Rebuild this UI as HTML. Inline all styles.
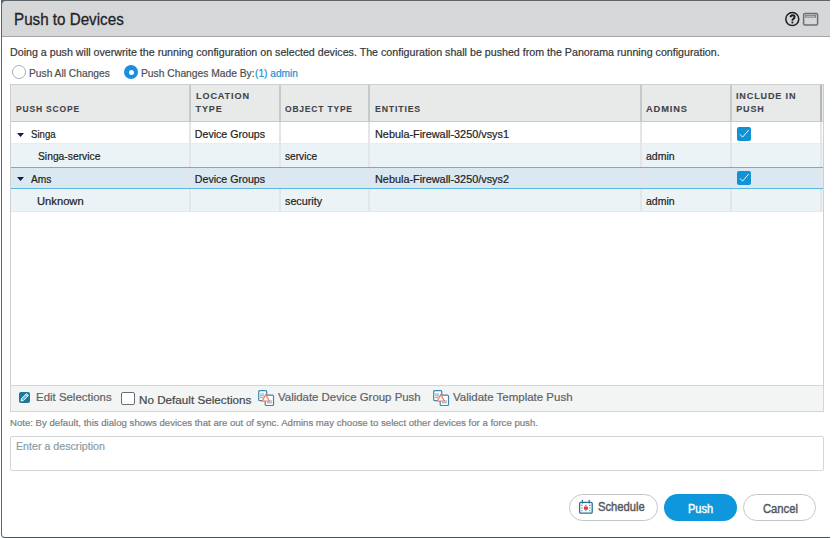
<!DOCTYPE html>
<html><head><meta charset="utf-8"><style>
*{box-sizing:border-box;margin:0;padding:0}
html,body{width:834px;height:538px;overflow:hidden;background:#fff;font-family:"Liberation Sans",sans-serif}
.a{position:absolute}
.t{position:absolute;white-space:nowrap;transform-origin:0 0}
</style></head><body>
<div class="a" style="left:1px;top:0;width:829px;height:538px;border-left:1px solid #5e6569;border-top:1px solid #5e6569;border-bottom:1px solid #4a4f52;border-bottom-left-radius:4px"></div>
<div class="a" style="left:1px;top:0;width:6px;height:6px;background:#5e6569"></div>
<div class="a" style="left:2px;top:1px;width:828px;height:36px;background:#d6d7d9;border-bottom:1px solid #a3a7ab;border-top-left-radius:4px"></div>
<svg class="a" style="left:784px;top:11px" width="17" height="17" viewBox="0 0 17 17"><circle cx="8.3" cy="8.1" r="6.5" fill="none" stroke="#1e1e1e" stroke-width="1.5"/><path d="M6.6 6.3C6.6 4.9 7.5 4.2 8.6 4.2C9.8 4.2 10.6 5 10.6 6C10.6 7.1 9.9 7.5 9.2 8C8.6 8.4 8.4 8.8 8.4 9.7" fill="none" stroke="#1e1e1e" stroke-width="1.9"/><circle cx="8.4" cy="11.5" r="1.1" fill="#1e1e1e"/></svg>
<svg class="a" style="left:802px;top:12px" width="17" height="15" viewBox="0 0 17 15"><rect x="1.6" y="1.5" width="14" height="11.5" rx="1.3" fill="none" stroke="#6a6e72" stroke-width="1.5"/><rect x="3.6" y="3.3" width="10" height="1.8" fill="none" stroke="#6f7477" stroke-width="0.9"/></svg>
<div class="a" style="left:12px;top:65px;width:14px;height:14px;border-radius:50%;border:1px solid #a8acb0;background:#fff"></div>
<div class="a" style="left:124px;top:65px;width:14px;height:14px;border-radius:50%;background:#1a8fe0"></div>
<div class="a" style="left:128.5px;top:69.5px;width:5px;height:5px;border-radius:50%;background:#fff"></div>
<div class="a" style="left:10px;top:84px;width:814px;height:328px;border:1px solid #cdd0d3;background:#fff"></div>
<div class="a" style="left:11px;top:85px;width:812px;height:37px;background:#e8e9e9;border-bottom:1px solid #c8cbce"></div>
<div class="a" style="left:189px;top:85px;width:2px;height:36px;background:#c6c9cc"></div>
<div class="a" style="left:279px;top:85px;width:2px;height:36px;background:#c6c9cc"></div>
<div class="a" style="left:368px;top:85px;width:2px;height:36px;background:#c6c9cc"></div>
<div class="a" style="left:640px;top:85px;width:2px;height:36px;background:#c6c9cc"></div>
<div class="a" style="left:730px;top:85px;width:2px;height:36px;background:#c6c9cc"></div>
<div class="a" style="left:820px;top:85px;width:2px;height:36px;background:#b2b7bb"></div>
<div class="a" style="left:11px;top:122px;width:812px;height:21px;background:#ffffff"></div>
<div class="a" style="left:11px;top:143px;width:812px;height:1px;background:#e9ecee"></div>
<div class="a" style="left:11px;top:144px;width:812px;height:23px;background:#ecf3f6"></div>
<div class="a" style="left:11px;top:168px;width:812px;height:20px;background:#d9e8f1"></div>
<div class="a" style="left:11px;top:189px;width:812px;height:22px;background:#ecf3f6"></div>
<div class="a" style="left:11px;top:211px;width:812px;height:1px;background:#e6e9eb"></div>
<div class="a" style="left:189px;top:122px;width:2px;height:45px;background:#e2e6e8"></div>
<div class="a" style="left:189px;top:168px;width:2px;height:20px;background:#e2e6e8"></div>
<div class="a" style="left:189px;top:189px;width:2px;height:22px;background:#e2e6e8"></div>
<div class="a" style="left:279px;top:122px;width:2px;height:45px;background:#e2e6e8"></div>
<div class="a" style="left:279px;top:168px;width:2px;height:20px;background:#e2e6e8"></div>
<div class="a" style="left:279px;top:189px;width:2px;height:22px;background:#e2e6e8"></div>
<div class="a" style="left:368px;top:122px;width:2px;height:45px;background:#e2e6e8"></div>
<div class="a" style="left:368px;top:168px;width:2px;height:20px;background:#e2e6e8"></div>
<div class="a" style="left:368px;top:189px;width:2px;height:22px;background:#e2e6e8"></div>
<div class="a" style="left:640px;top:122px;width:2px;height:45px;background:#e2e6e8"></div>
<div class="a" style="left:640px;top:168px;width:2px;height:20px;background:#e2e6e8"></div>
<div class="a" style="left:640px;top:189px;width:2px;height:22px;background:#e2e6e8"></div>
<div class="a" style="left:730px;top:122px;width:2px;height:45px;background:#e2e6e8"></div>
<div class="a" style="left:730px;top:168px;width:2px;height:20px;background:#e2e6e8"></div>
<div class="a" style="left:730px;top:189px;width:2px;height:22px;background:#e2e6e8"></div>
<div class="a" style="left:820px;top:122px;width:2px;height:45px;background:#e2e6e8"></div>
<div class="a" style="left:820px;top:168px;width:2px;height:20px;background:#e2e6e8"></div>
<div class="a" style="left:820px;top:189px;width:2px;height:22px;background:#e2e6e8"></div>
<div class="a" style="left:11px;top:167px;width:812px;height:1px;background:#5db4dc"></div>
<div class="a" style="left:11px;top:188px;width:812px;height:1px;background:#5db4dc"></div>
<svg class="a" style="left:17px;top:133px" width="7" height="4" viewBox="0 0 7 4"><path d="M0 0H7L3.5 4Z" fill="#161a4a"/></svg>
<svg class="a" style="left:17px;top:177px" width="7" height="4" viewBox="0 0 7 4"><path d="M0 0H7L3.5 4Z" fill="#161a4a"/></svg>
<div class="a" style="left:737px;top:127px;width:14px;height:14px;border-radius:2px;background:#0f93d6"></div>
<svg class="a" style="left:737px;top:127px" width="14" height="14" viewBox="0 0 14 14"><path d="M3 7.3L5.5 10.2L11.8 2.9" fill="none" stroke="#e6f4fc" stroke-width="1"/></svg>
<div class="a" style="left:737px;top:171px;width:14px;height:14px;border-radius:2px;background:#0f93d6"></div>
<svg class="a" style="left:737px;top:171px" width="14" height="14" viewBox="0 0 14 14"><path d="M3 7.3L5.5 10.2L11.8 2.9" fill="none" stroke="#e6f4fc" stroke-width="1"/></svg>
<div class="a" style="left:10px;top:385px;width:814px;height:27px;background:#f3f4f4;border:1px solid #d2d5d7"></div>
<div class="a" style="left:19px;top:392px;width:11px;height:11px;border-radius:2px;background:#1f7699"></div>
<svg class="a" style="left:19px;top:392px" width="11" height="11" viewBox="0 0 11 11"><path d="M2 9L2.5 6.6L7.5 1.6L9.4 3.5L4.4 8.5Z" fill="#7fb3cc" stroke="#eef6fa" stroke-width="1"/><path d="M6.6 2.5L8.5 4.4" stroke="#eef6fa" stroke-width="0.8"/></svg>
<div class="a" style="left:121px;top:392px;width:14px;height:13px;border-radius:2px;border:1px solid #6b6f73;background:#fff"></div>
<svg class="a" style="left:258px;top:390px" width="17" height="17" viewBox="0 0 17 17"><rect x="0.7" y="0.7" width="8" height="10" rx="1" fill="#fff" stroke="#3d88ad" stroke-width="1.2"/><path d="M2 4H6M2 5.8H6M2 7.6H5" stroke="#6aa3c2" stroke-width="0.9"/><rect x="7.2" y="5.2" width="8.3" height="10.3" rx="1" fill="#fff" stroke="#3d88ad" stroke-width="1.2"/><path d="M9 12.8H14M9 11H14" stroke="#6aa3c2" stroke-width="0.9"/><path d="M7.8 4.6L11.4 11H4.2Z" fill="#fff" stroke="#f07a5c" stroke-width="1.2" stroke-linejoin="round"/></svg>
<svg class="a" style="left:433px;top:390px" width="17" height="17" viewBox="0 0 17 17"><rect x="0.7" y="0.7" width="8" height="10" rx="1" fill="#fff" stroke="#3d88ad" stroke-width="1.2"/><path d="M2 4H6M2 5.8H6M2 7.6H5" stroke="#6aa3c2" stroke-width="0.9"/><rect x="7.2" y="5.2" width="8.3" height="10.3" rx="1" fill="#fff" stroke="#3d88ad" stroke-width="1.2"/><path d="M9 12.8H14M9 11H14" stroke="#6aa3c2" stroke-width="0.9"/><path d="M7.8 4.6L11.4 11H4.2Z" fill="#fff" stroke="#f07a5c" stroke-width="1.2" stroke-linejoin="round"/></svg>
<div class="a" style="left:10px;top:436px;width:814px;height:35px;border:1px solid #d3d6d8;border-radius:2px;background:#fff"></div>
<div class="a" style="left:569px;top:494px;width:89px;height:27px;border-radius:14px;border:1px solid #c3c6c9;background:#fff"></div>
<div class="a" style="left:664px;top:494px;width:73px;height:27px;border-radius:14px;background:#0e97dc"></div>
<div class="a" style="left:743px;top:494px;width:73px;height:27px;border-radius:14px;border:1px solid #c3c6c9;background:#fff"></div>
<svg class="a" style="left:578px;top:499px" width="16" height="16" viewBox="0 0 16 16"><rect x="1.6" y="3.3" width="12.6" height="10.8" rx="1.2" fill="#fff" stroke="#2a6f98" stroke-width="1.3"/><path d="M4.4 0.8V4.4M11.2 0.8V4.4" stroke="#2a6f98" stroke-width="1.2"/><path d="M3.2 6.4h1.4M7.1 6.4h1.4M11.1 6.4h1.4M3.2 9h1.4M11.1 9h1.4M3.2 11.8h1.4M7.1 11.8h1.4M11.1 11.8h1.4" stroke="#4a8fb5" stroke-width="1.1"/><rect x="5.9" y="7.6" width="4" height="3.1" rx="0.4" fill="#d9383f"/></svg>
<div class="t" style="left:14.00px;top:11.58px;font-size:15.85px;line-height:15.85px;font-weight:400;color:#1f2326;-webkit-text-stroke:0.3px #1f2326;letter-spacing:0px;transform:scaleX(0.9584);">Push to Devices</div>
<div class="t" style="left:9.50px;top:47.20px;font-size:10.63px;line-height:10.63px;font-weight:400;color:#33373a;-webkit-text-stroke:0.2px #33373a;letter-spacing:0px;transform:scaleX(1.0040);">Doing a push will overwrite the running configuration on selected devices. The configuration shall be pushed from the Panorama running configuration.</div>
<div class="t" style="left:28.70px;top:67.90px;font-size:10.63px;line-height:10.63px;font-weight:400;color:#4a4e52;-webkit-text-stroke:0.2px #4a4e52;letter-spacing:0px;transform:scaleX(0.9639);">Push All Changes</div>
<div class="t" style="left:140.70px;top:67.90px;font-size:10.63px;line-height:10.63px;font-weight:400;color:#4a4e52;-webkit-text-stroke:0.2px #4a4e52;letter-spacing:0px;transform:scaleX(0.9664);">Push Changes Made By:</div>
<div class="t" style="left:255.00px;top:67.90px;font-size:10.63px;line-height:10.63px;font-weight:400;color:#1a8fd6;-webkit-text-stroke:0.2px #1a8fd6;letter-spacing:0px;transform:scaleX(0.9556);">(1) admin</div>
<div class="t" style="left:16.00px;top:105.28px;font-size:9.00px;line-height:9.00px;font-weight:700;color:#3f4449;-webkit-text-stroke:0.1px #3f4449;letter-spacing:0.85px;transform:scaleX(0.9463);">PUSH SCOPE</div>
<div class="t" style="left:195.60px;top:92.18px;font-size:9.00px;line-height:9.00px;font-weight:700;color:#3f4449;-webkit-text-stroke:0.1px #3f4449;letter-spacing:0.85px;transform:scaleX(1.0135);">LOCATION</div>
<div class="t" style="left:195.60px;top:105.28px;font-size:9.00px;line-height:9.00px;font-weight:700;color:#3f4449;-webkit-text-stroke:0.1px #3f4449;letter-spacing:0.85px;">TYPE</div>
<div class="t" style="left:285.00px;top:105.28px;font-size:9.00px;line-height:9.00px;font-weight:700;color:#3f4449;-webkit-text-stroke:0.1px #3f4449;letter-spacing:0.85px;transform:scaleX(0.9437);">OBJECT TYPE</div>
<div class="t" style="left:375.30px;top:105.28px;font-size:9.00px;line-height:9.00px;font-weight:700;color:#3f4449;-webkit-text-stroke:0.1px #3f4449;letter-spacing:0.85px;transform:scaleX(0.9717);">ENTITIES</div>
<div class="t" style="left:646.30px;top:105.28px;font-size:9.00px;line-height:9.00px;font-weight:700;color:#3f4449;-webkit-text-stroke:0.1px #3f4449;letter-spacing:0.85px;transform:scaleX(1.0325);">ADMINS</div>
<div class="t" style="left:736.20px;top:92.18px;font-size:9.00px;line-height:9.00px;font-weight:700;color:#3f4449;-webkit-text-stroke:0.1px #3f4449;letter-spacing:0.85px;transform:scaleX(1.0051);">INCLUDE IN</div>
<div class="t" style="left:736.20px;top:105.28px;font-size:9.00px;line-height:9.00px;font-weight:700;color:#3f4449;-webkit-text-stroke:0.1px #3f4449;letter-spacing:0.85px;">PUSH</div>
<div class="t" style="left:31.40px;top:129.20px;font-size:10.63px;line-height:10.63px;font-weight:400;color:#222;-webkit-text-stroke:0.2px #222;letter-spacing:0px;transform:scaleX(0.9037);">Singa</div>
<div class="t" style="left:194.80px;top:129.20px;font-size:10.63px;line-height:10.63px;font-weight:400;color:#222;-webkit-text-stroke:0.2px #222;letter-spacing:0px;">Device Groups</div>
<div class="t" style="left:374.80px;top:129.20px;font-size:10.63px;line-height:10.63px;font-weight:400;color:#222;-webkit-text-stroke:0.2px #222;letter-spacing:0px;transform:scaleX(1.0223);">Nebula-Firewall-3250/vsys1</div>
<div class="t" style="left:37.70px;top:151.40px;font-size:10.63px;line-height:10.63px;font-weight:400;color:#222;-webkit-text-stroke:0.2px #222;letter-spacing:0px;transform:scaleX(0.9688);">Singa-service</div>
<div class="t" style="left:285.20px;top:151.40px;font-size:10.63px;line-height:10.63px;font-weight:400;color:#222;-webkit-text-stroke:0.2px #222;letter-spacing:0px;transform:scaleX(0.9529);">service</div>
<div class="t" style="left:646.30px;top:151.40px;font-size:10.63px;line-height:10.63px;font-weight:400;color:#222;-webkit-text-stroke:0.2px #222;letter-spacing:0px;transform:scaleX(0.9897);">admin</div>
<div class="t" style="left:30.90px;top:173.50px;font-size:10.63px;line-height:10.63px;font-weight:400;color:#222;-webkit-text-stroke:0.2px #222;letter-spacing:0px;transform:scaleX(0.9571);">Ams</div>
<div class="t" style="left:194.80px;top:173.50px;font-size:10.63px;line-height:10.63px;font-weight:400;color:#222;-webkit-text-stroke:0.2px #222;letter-spacing:0px;">Device Groups</div>
<div class="t" style="left:374.80px;top:173.50px;font-size:10.63px;line-height:10.63px;font-weight:400;color:#222;-webkit-text-stroke:0.2px #222;letter-spacing:0px;transform:scaleX(1.0223);">Nebula-Firewall-3250/vsys2</div>
<div class="t" style="left:36.70px;top:195.90px;font-size:10.63px;line-height:10.63px;font-weight:400;color:#222;-webkit-text-stroke:0.2px #222;letter-spacing:0px;transform:scaleX(1.0535);">Unknown</div>
<div class="t" style="left:284.90px;top:195.90px;font-size:10.63px;line-height:10.63px;font-weight:400;color:#222;-webkit-text-stroke:0.2px #222;letter-spacing:0px;transform:scaleX(1.0135);">security</div>
<div class="t" style="left:646.30px;top:195.90px;font-size:10.63px;line-height:10.63px;font-weight:400;color:#222;-webkit-text-stroke:0.2px #222;letter-spacing:0px;transform:scaleX(0.9897);">admin</div>
<div class="t" style="left:35.60px;top:392.12px;font-size:11.32px;line-height:11.32px;font-weight:400;color:#5f6367;-webkit-text-stroke:0.2px #5f6367;letter-spacing:0px;transform:scaleX(1.0108);">Edit Selections</div>
<div class="t" style="left:138.70px;top:394.82px;font-size:11.32px;line-height:11.32px;font-weight:400;color:#44484c;-webkit-text-stroke:0.2px #44484c;letter-spacing:0px;transform:scaleX(1.0324);">No Default Selections</div>
<div class="t" style="left:278.00px;top:392.22px;font-size:11.32px;line-height:11.32px;font-weight:400;color:#5f6367;-webkit-text-stroke:0.2px #5f6367;letter-spacing:0px;transform:scaleX(1.0099);">Validate Device Group Push</div>
<div class="t" style="left:452.80px;top:392.22px;font-size:11.32px;line-height:11.32px;font-weight:400;color:#5f6367;-webkit-text-stroke:0.2px #5f6367;letter-spacing:0px;transform:scaleX(1.0145);">Validate Template Push</div>
<div class="t" style="left:10.40px;top:418.43px;font-size:9.53px;line-height:9.53px;font-weight:400;color:#7b7f83;-webkit-text-stroke:0.2px #7b7f83;letter-spacing:0px;transform:scaleX(1.0092);">Note: By default, this dialog shows devices that are out of sync. Admins may choose to select other devices for a force push.</div>
<div class="t" style="left:15.50px;top:441.00px;font-size:10.63px;line-height:10.63px;font-weight:400;color:#8c9ba5;-webkit-text-stroke:0.2px #8c9ba5;letter-spacing:0px;transform:scaleX(1.0034);">Enter a description</div>
<div class="t" style="left:597.80px;top:499.83px;font-size:13.08px;line-height:13.08px;font-weight:400;color:#55595d;-webkit-text-stroke:0.45px #55595d;letter-spacing:0px;transform:scaleX(0.8556);">Schedule</div>
<div class="t" style="left:687.60px;top:502.87px;font-size:12.79px;line-height:12.79px;font-weight:400;color:#ffffff;-webkit-text-stroke:0.45px #ffffff;letter-spacing:0px;transform:scaleX(0.8607);">Push</div>
<div class="t" style="left:762.50px;top:502.87px;font-size:12.79px;line-height:12.79px;font-weight:400;color:#55595d;-webkit-text-stroke:0.45px #55595d;letter-spacing:0px;transform:scaleX(0.8795);">Cancel</div>
</body></html>
